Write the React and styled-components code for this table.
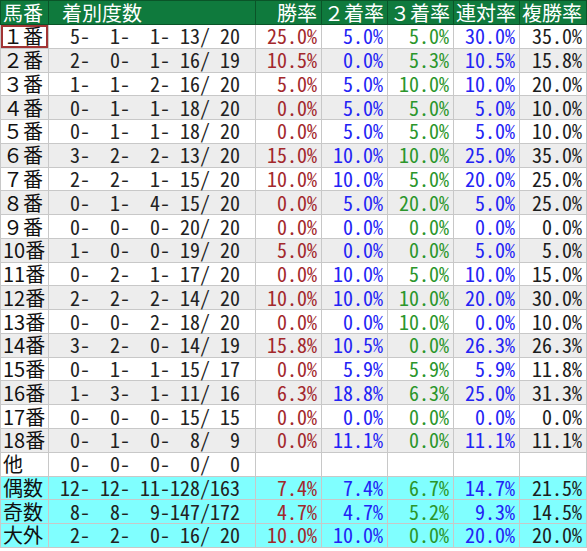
import React from 'react';
import styled, { createGlobalStyle } from 'styled-components';

const GlobalStyle = createGlobalStyle`
  html, body {
    margin: 0;
    padding: 0;
    background: #ffffff;
  }
`;

const Table = styled.table`
  border-collapse: collapse;
  table-layout: fixed;
  width: 586px;
  font-family: "Noto Sans CJK JP", sans-serif;
  font-size: 20px;
  line-height: 22px;
  color: #222;
`;

const Col = styled.col`
  width: ${p => p.$w}px;
`;

// header keeps full-width glyphs (２着率, ３着率)
const HeadCell = styled.th`
  height: 23px;
  padding: 0 ${p => (p.$left ? '0' : '4px')} 0 ${p => p.$indent || 2}px;
  background: #0f7a3d;
  color: #ffffff;
  font-weight: 400;
  text-align: ${p => (p.$left ? 'left' : 'right')};
  border: 1px solid #0a5428;
  white-space: pre;
`;

const Row = styled.tr`
  height: 23.78px;
  background: ${p => (p.$tone === 'cyan' ? '#80ffff' : p.$tone === 'gray' ? '#ededed' : '#ffffff')};
`;

const NameCell = styled.td`
  padding: 0 0 0 2px;
  border: 1px solid #c8c8c8;
  color: #111;
  white-space: pre;
  box-shadow: ${p => (p.$picked ? 'inset 0 0 0 2px #a23434' : 'none')};
`;

// half-width forms give the fixed-pitch digits of the sheet
const CountCell = styled.td`
  padding: 0 15px 0 0;
  text-align: right;
  border: 1px solid #c8c8c8;
  color: #222;
  white-space: pre;
  font-feature-settings: "hwid" 1;
`;

const RateCell = styled.td`
  padding: 0 4px 0 0;
  text-align: right;
  border: 1px solid #c8c8c8;
  color: ${p => p.$color};
  white-space: pre;
  font-feature-settings: "hwid" 1;
`;

const rateColors = ['#a3282c', '#2323f5', '#2b962b', '#2323f5', '#1c1c1c'];
const colWidths = [48, 207, 66, 66, 66, 66, 67];

const rows = [
  ['１番', 5, 1, 1, 13, 20, '25.0%', '5.0%', '5.0%', '30.0%', '35.0%'],
  ['２番', 2, 0, 1, 16, 19, '10.5%', '0.0%', '5.3%', '10.5%', '15.8%'],
  ['３番', 1, 1, 2, 16, 20, '5.0%', '5.0%', '10.0%', '10.0%', '20.0%'],
  ['４番', 0, 1, 1, 18, 20, '0.0%', '5.0%', '5.0%', '5.0%', '10.0%'],
  ['５番', 0, 1, 1, 18, 20, '0.0%', '5.0%', '5.0%', '5.0%', '10.0%'],
  ['６番', 3, 2, 2, 13, 20, '15.0%', '10.0%', '10.0%', '25.0%', '35.0%'],
  ['７番', 2, 2, 1, 15, 20, '10.0%', '10.0%', '5.0%', '20.0%', '25.0%'],
  ['８番', 0, 1, 4, 15, 20, '0.0%', '5.0%', '20.0%', '5.0%', '25.0%'],
  ['９番', 0, 0, 0, 20, 20, '0.0%', '0.0%', '0.0%', '0.0%', '0.0%'],
  ['10番', 1, 0, 0, 19, 20, '5.0%', '0.0%', '0.0%', '5.0%', '5.0%'],
  ['11番', 0, 2, 1, 17, 20, '0.0%', '10.0%', '5.0%', '10.0%', '15.0%'],
  ['12番', 2, 2, 2, 14, 20, '10.0%', '10.0%', '10.0%', '20.0%', '30.0%'],
  ['13番', 0, 0, 2, 18, 20, '0.0%', '0.0%', '10.0%', '0.0%', '10.0%'],
  ['14番', 3, 2, 0, 14, 19, '15.8%', '10.5%', '0.0%', '26.3%', '26.3%'],
  ['15番', 0, 1, 1, 15, 17, '0.0%', '5.9%', '5.9%', '5.9%', '11.8%'],
  ['16番', 1, 3, 1, 11, 16, '6.3%', '18.8%', '6.3%', '25.0%', '31.3%'],
  ['17番', 0, 0, 0, 15, 15, '0.0%', '0.0%', '0.0%', '0.0%', '0.0%'],
  ['18番', 0, 1, 0, 8, 9, '0.0%', '11.1%', '0.0%', '11.1%', '11.1%'],
  ['他', 0, 0, 0, 0, 0, '', '', '', '', ''],
  ['偶数', 12, 12, 11, 128, 163, '7.4%', '7.4%', '6.7%', '14.7%', '21.5%'],
  ['奇数', 8, 8, 9, 147, 172, '4.7%', '4.7%', '5.2%', '9.3%', '14.5%'],
  ['大外', 2, 2, 0, 16, 20, '10.0%', '10.0%', '0.0%', '20.0%', '20.0%'],
];

const pad = n => String(n).padStart(3, ' ');
const record = (a, b, c, d, n) => `${pad(a)}-${pad(b)}-${pad(c)}-${pad(d)}/${pad(n)}`;

const toneOf = i => {
  if (i >= 19) return 'cyan';
  return i % 2 === 1 ? 'gray' : 'white';
};

const App = () => (
  <>
    <GlobalStyle />
    <Table>
      <colgroup>
        {colWidths.map((w, i) => <Col key={i} $w={w} />)}
      </colgroup>
      <thead>
        <tr>
          <HeadCell $left>馬番</HeadCell>
          <HeadCell $left $indent={13}>着別度数</HeadCell>
          <HeadCell>勝率</HeadCell>
          <HeadCell>２着率</HeadCell>
          <HeadCell>３着率</HeadCell>
          <HeadCell>連対率</HeadCell>
          <HeadCell>複勝率</HeadCell>
        </tr>
      </thead>
      <tbody>
        {rows.map((r, i) => (
          <Row key={r[0]} $tone={toneOf(i)}>
            <NameCell $picked={i === 0}>{r[0]}</NameCell>
            <CountCell>{record(r[1], r[2], r[3], r[4], r[5])}</CountCell>
            {r.slice(6).map((v, j) => (
              <RateCell key={j} $color={rateColors[j]}>{v}</RateCell>
            ))}
          </Row>
        ))}
      </tbody>
    </Table>
  </>
);

export default App;
